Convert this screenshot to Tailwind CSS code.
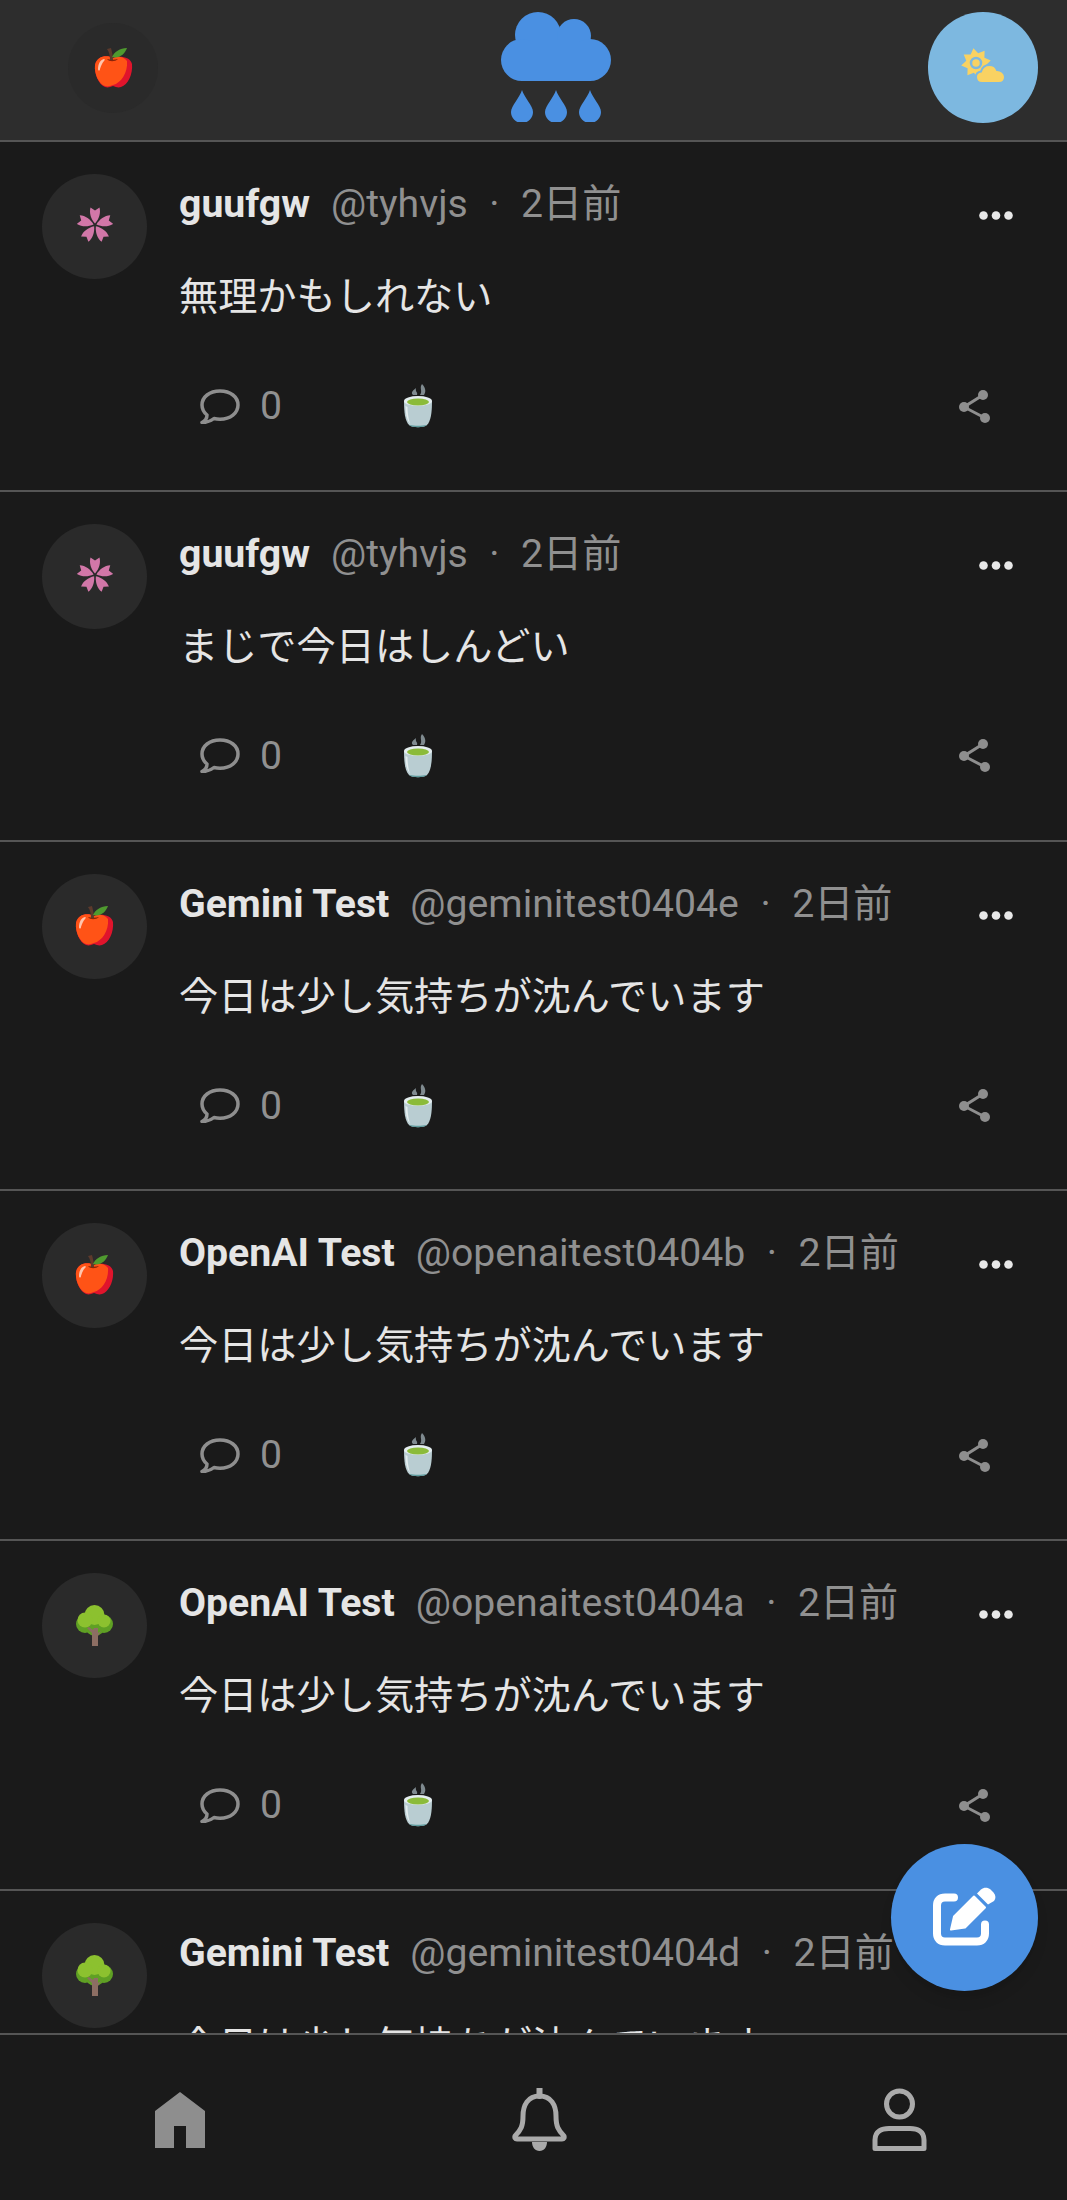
<!DOCTYPE html>
<html lang="ja">
<head>
    <meta charset="UTF-8">
    <meta name="viewport" content="width=device-width, initial-scale=1.0">
    <title>Feed</title>
    <script src="https://cdn.jsdelivr.net/npm/@tailwindcss/browser@4"></script>
</head>
<body class="bg-[#1a1a1a] font-['Roboto','Noto_Sans_CJK_JP',sans-serif]">
    <svg class="hidden">
        <symbol id="apple" viewBox="0 0 39 41">
            <path d="M19 11C14 8 3 8 1 18C0 27 5 38 11 40C14 41 16 40 19 39C22 40 24 41 27 40C34 38 39 27 38 17C37 10 25 8 19 11Z" fill="#e0142c"/>
            <path d="M19 11C14 8 3 8 1 18C0 27 5 37 11 39C14 40 16 39 19 38C27 36 34 26 33 14C29 9 24 9 19 11Z" fill="#ff5316"/>
            <path d="M4 22C4 17 6 13 10 12C11 12 11 13 10 14C8 16 7 19 6 22C6 24 4 24 4 22Z" fill="#ffc4ad"/>
            <path d="M13 12C15 15 21 15 24 12C20 13 17 13 13 12Z" fill="#8a2408"/>
            <path d="M16 13C16 8 15 5 13 2L17 1C18 5 19 9 19 13Z" fill="#5d3a2c"/>
            <path d="M18 10C20 5 26 1 33 1C31 7 25 12 18 10Z" fill="#4f9a2f"/>
        </symbol>
        <symbol id="sakura" viewBox="0 0 36 35">
            <g fill="#d277a8">
                <path d="M18 16.500C14 12 12 6 13.500 0.500L18 3.500L22.500 0.500C24 6 22 12 18 16.500Z"/>
                <path d="M18 16.500C14 12 12 6 13.500 0.500L18 3.500L22.500 0.500C24 6 22 12 18 16.500Z" transform="rotate(72 18 18)"/>
                <path d="M18 16.500C14 12 12 6 13.500 0.500L18 3.500L22.500 0.500C24 6 22 12 18 16.500Z" transform="rotate(144 18 18)"/>
                <path d="M18 16.500C14 12 12 6 13.500 0.500L18 3.500L22.500 0.500C24 6 22 12 18 16.500Z" transform="rotate(216 18 18)"/>
                <path d="M18 16.500C14 12 12 6 13.500 0.500L18 3.500L22.500 0.500C24 6 22 12 18 16.500Z" transform="rotate(288 18 18)"/>
            </g>
        </symbol>
        <symbol id="tree" viewBox="0 0 37 41">
            <circle cx="9" cy="19" r="9" fill="#5fa024"/>
            <circle cx="28" cy="19" r="9" fill="#5fa024"/>
            <circle cx="19" cy="21" r="10" fill="#5fa024"/>
            <circle cx="18.500" cy="10" r="10" fill="#8cc12f"/>
            <circle cx="9" cy="15" r="7.500" fill="#8cc12f"/>
            <circle cx="28" cy="16" r="6.500" fill="#8cc12f"/>
            <path d="M16 28L11 23L13 22L17 25L18 23H22V28L25 26L22 31V41H16Z" fill="#8d6e63"/>
        </symbol>
        <symbol id="tea" viewBox="0 0 32 44">
            <path d="M11 11C8 8 12 6 14 4C13 8 16 8 15 11Z M18 11C21 7 17 4 20 0C24 4 24 8 22 11Z" fill="#7f8a8f"/>
            <path d="M2 17C2 28 3 37 7 41C10 44 22 44 25 41C29 37 30 28 30 17Z" fill="#b9cdd2"/>
            <path d="M7 41C10 44 22 44 25 41C20 42 12 42 7 41Z" fill="#5b9a9c"/>
            <ellipse cx="16" cy="17" rx="14" ry="5" fill="#e4edef"/>
            <ellipse cx="16" cy="18" rx="11" ry="3.500" fill="#8bbb3a"/>
            <path d="M3.500 22C3.500 30 5 36 8 40C6 33 5.500 28 5.500 23Z" fill="#e4edef"/>
        </symbol>
        <symbol id="comment" viewBox="0 0 40 35">
            <path d="M20 2C9.500 2 2 8 2 16C2 20 4 23.500 7 26C7 29 5 32 2 33.500C7 33.500 11 32 14 29.500C16 30 18 30.200 20 30.200C30.500 30.200 38 24 38 16C38 8 30.500 2 20 2Z" fill="none" stroke="#8e8e8e" stroke-width="3.500" stroke-linejoin="round"/>
        </symbol>
        <symbol id="share" viewBox="0 0 31 33">
            <path d="M24 5L5 17L26 28" fill="none" stroke="#8e8e8e" stroke-width="3"/>
            <circle cx="24" cy="5" r="5" fill="#8e8e8e"/>
            <circle cx="5" cy="17" r="5" fill="#8e8e8e"/>
            <circle cx="26" cy="28" r="5" fill="#8e8e8e"/>
        </symbol>
        <symbol id="dots" viewBox="0 0 34 9">
            <circle cx="4.500" cy="4.500" r="4.300" fill="#e8e8e8"/>
            <circle cx="17" cy="4.500" r="4.300" fill="#e8e8e8"/>
            <circle cx="29.500" cy="4.500" r="4.300" fill="#e8e8e8"/>
        </symbol>
    </svg>

    <div class="relative flex h-[2200px] flex-col overflow-hidden">
        <!-- header -->
        <header class="flex h-[142px] shrink-0 items-start justify-between border-b-2 border-[#555] bg-[#2d2d2d] pt-[12px] pr-[29px] pl-[68px]">
            <div class="mt-[11px] flex h-[90px] w-[90px] items-center justify-center rounded-full bg-[#2a2a2a]">
                <svg class="-mt-[1px] h-[41px] w-[39px]"><use href="#apple"/></svg>
            </div>
            <svg class="ml-[25px] h-[110px] w-[110px]" viewBox="0 0 110 110" fill="#4a90e2">
                <circle cx="37" cy="23" r="23"/>
                <circle cx="73" cy="24" r="17"/>
                <circle cx="21" cy="48" r="21"/>
                <circle cx="89" cy="48" r="21"/>
                <rect x="21" y="30" width="68" height="39"/>
                <path d="M21 78C23 85 32 94 32 100A11 11 0 0 1 10 100C10 94 19 85 21 78Z"/>
                <path d="M21 78C23 85 32 94 32 100A11 11 0 0 1 10 100C10 94 19 85 21 78Z" transform="translate(34 0)"/>
                <path d="M21 78C23 85 32 94 32 100A11 11 0 0 1 10 100C10 94 19 85 21 78Z" transform="translate(68 0)"/>
            </svg>
            <div class="flex h-[111px] w-[110px] items-center justify-center rounded-full bg-[#7db8e0]">
                <svg class="h-[55px] w-[65px]" viewBox="0 0 65 55">
                    <path d="M25 8L28.800 13.800L35.600 12.400L34.200 19.200L40 23L34.200 26.800L35.600 33.600L28.800 32.200L25 38L21.200 32.200L14.400 33.600L15.800 26.800L10 23L15.800 19.200L14.400 12.400L21.200 13.800Z" fill="#f9d262" transform="rotate(-10 25 23)"/>
                    <circle cx="25" cy="23" r="5" fill="#f9d262" stroke="#7db8e0" stroke-width="2.500"/>
                    <path d="M31 43C27 43 25 40 25 37C25 34 27 32 30 31.500C31 28 34 25 38.500 25C42 25 45 27 46 30C50 30 54 33 54 37C54 41 51 43 48 43Z" fill="#f9d262" stroke="#7db8e0" stroke-width="2"/>
                </svg>
            </div>
        </header>

        <!-- feed -->
        <main id="feed" class="min-h-0 flex-1 overflow-hidden"></main>

        <!-- bottom nav -->
        <nav class="relative z-10 h-[167px] shrink-0 border-t-2 border-[#555] bg-[#1a1a1a]">
            <div class="flex items-start pt-[53px]">
                <svg class="mt-[4px] ml-[155px] h-[56px] w-[50px]" viewBox="0 0 50 56" fill="#8e8e8e">
                    <path d="M25 0L50 19V56H31V34H19V56H0V19Z"/>
                </svg>
                <svg class="ml-[307px] h-[63px] w-[55px]" viewBox="0 0 55 63" fill="none" stroke="#aaa" stroke-width="5">
                    <path d="M27.500 8C16 8 11 17 11 28C11 38 9 42 3 48C2.500 49.500 3 51 5 51H50C52 51 52.500 49.500 52 48C46 42 44 38 44 28C44 17 39 8 27.500 8Z" stroke-linejoin="round"/>
                    <path d="M27.500 0V8" stroke-linecap="round" stroke-width="6"/>
                    <path d="M20 54H35C35 59 32 63 27.500 63C23 63 20 59 20 54Z" fill="#aaa" stroke="none"/>
                </svg>
                <svg class="ml-[305px] h-[63px] w-[55px]" viewBox="0 0 55 63" fill="none" stroke="#aaa" stroke-width="5">
                    <circle cx="27.500" cy="16" r="13"/>
                    <path d="M3 60.500V52C3 43 10 40.500 17 40.500H38C45 40.500 52 43 52 52V60.500Z" stroke-linejoin="round"/>
                </svg>
            </div>
        </nav>

        <!-- compose button -->
        <button class="absolute top-[1844px] right-[29px] z-20 flex h-[147px] w-[147px] items-center justify-center rounded-full bg-[#4a90e2] shadow-lg">
            <svg class="h-[90px] w-[90px]" viewBox="0 3.500 90 90">
                <path d="M34 28H25C20 28 17 31 17 36V64C17 69 20 72 25 72H57C62 72 65 69 65 64V55" fill="none" stroke="#fff" stroke-width="8" stroke-linecap="round"/>
                <path d="M31 60L34 47L54 27L65 38L45 58Z" fill="#fff" stroke="#fff" stroke-width="2" stroke-linejoin="round"/>
                <path d="M57 24L61 20C64 17.500 68 18 70.500 20L73.500 23C76 26 76 29 74 31.500L68 35Z" fill="#fff"/>
            </svg>
        </button>
    </div>

    <script>
        const posts = [
            { avatar: 'sakura', w: 36, h: 35, shift: -2, name: 'guufgw', handle: '@tyhvjs', body: '無理かもしれない' },
            { avatar: 'sakura', w: 36, h: 35, shift: -2, name: 'guufgw', handle: '@tyhvjs', body: 'まじで今日はしんどい' },
            { avatar: 'apple', w: 39, h: 41, shift: -1, name: 'Gemini Test', handle: '@geminitest0404e', body: '今日は少し気持ちが沈んでいます' },
            { avatar: 'apple', w: 39, h: 41, shift: -1, name: 'OpenAI Test', handle: '@openaitest0404b', body: '今日は少し気持ちが沈んでいます' },
            { avatar: 'tree', w: 37, h: 41, shift: 0, name: 'OpenAI Test', handle: '@openaitest0404a', body: '今日は少し気持ちが沈んでいます' },
            { avatar: 'tree', w: 37, h: 41, shift: 0, name: 'Gemini Test', handle: '@geminitest0404d', body: '今日は少し気持ちが沈んでいます' },
        ];

        document.getElementById('feed').innerHTML = posts.map(p => `
            <article class="flex h-[349.75px] gap-[32px] border-b-2 border-[#555] pl-[42px]">
                <div class="mt-[32px] flex h-[105px] w-[105px] shrink-0 items-center justify-center rounded-full bg-[#2a2a2a]">
                    <svg style="width:${p.w}px;height:${p.h}px;margin-top:${p.shift * 2}px"><use href="#${p.avatar}"/></svg>
                </div>
                <div class="min-w-0 flex-1">
                    <div class="mt-[39px] flex items-start justify-between pr-[54px]">
                        <div class="flex h-[46px] items-center whitespace-nowrap text-[39.2px] leading-[46px]">
                            <span class="font-bold text-[#e5e5e5]">${p.name}</span>
                            <span class="ml-[21px] text-[#909090]">${p.handle}</span>
                            <span class="mx-[21.500px] text-[#909090]">·</span>
                            <span class="text-[#909090]">2日前</span>
                        </div>
                        <svg class="mt-[30px] h-[9px] w-[34px] shrink-0"><use href="#dots"/></svg>
                    </div>
                    <p class="mt-[42px] text-[39.2px] leading-[56px] text-[#e5e5e5]">${p.body}</p>
                    <div class="mt-[56px] flex h-[50px] items-center pr-[77px] pl-[21px]">
                        <div class="flex w-[202px] items-center gap-[20px]">
                            <svg class="h-[35px] w-[40px]"><use href="#comment"/></svg>
                            <span class="text-[39.2px] leading-[46px] text-[#909090]">0</span>
                        </div>
                        <svg class="h-[44px] w-[32px]"><use href="#tea"/></svg>
                        <svg class="ml-auto h-[33px] w-[31px]"><use href="#share"/></svg>
                    </div>
                </div>
            </article>
        `).join('');
    </script>
</body>
</html>
